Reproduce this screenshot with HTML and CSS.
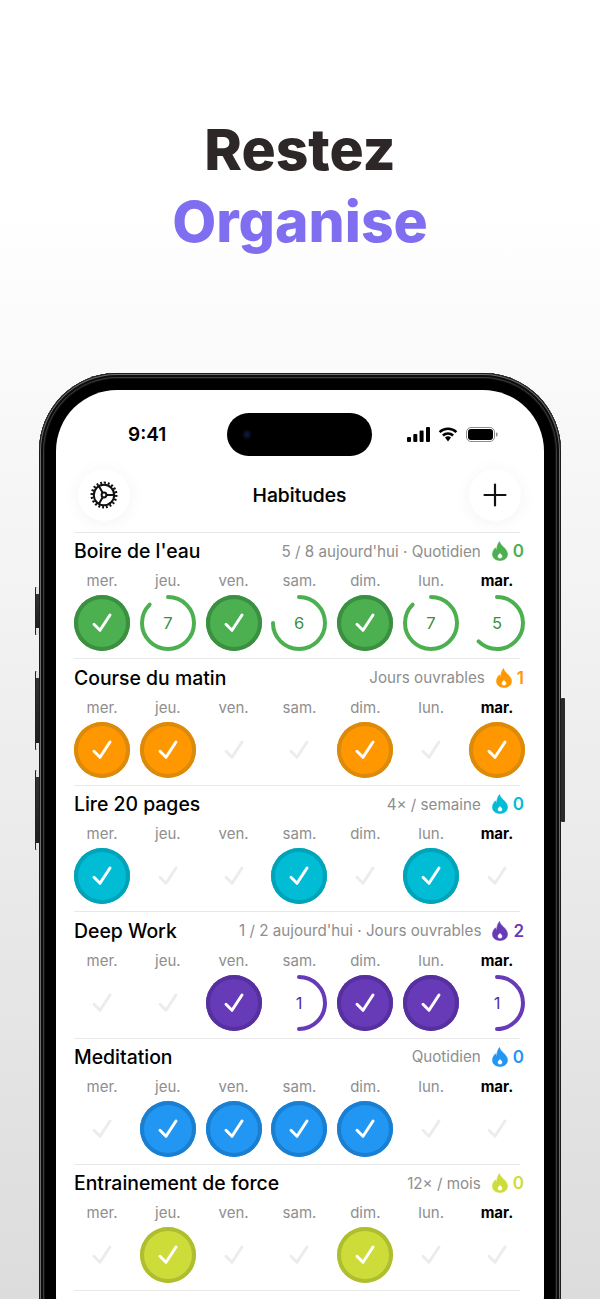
FILE: index.html
```html
<!DOCTYPE html>
<html lang="fr">
<head>
    <meta charset="UTF-8">
    <meta name="viewport" content="width=device-width, initial-scale=1.0">
    <title>Habitudes</title>
    <link rel="stylesheet" href="styles.css">
</head>
<body>
    <svg class="defs" width="0" height="0">
        <symbol id="check" viewBox="0 0 56 56"><path d="M20 29.300 26 35.300 36 20"/></symbol>
        <symbol id="flame" viewBox="0 0 18 20"><path fill-rule="evenodd" d="M8.500.5c.6 2.500 2.200 3.800 4 5.500 2 2 4 4.300 4 7.300 0 3.800-3.300 6.200-7.500 6.200s-7.500-2.400-7.500-6.200c0-3 1.500-5 3-6.500.2 1.200.6 2 1.200 2.400C5.700 6.200 6.500 3 8.500.5zM9 11.500c-.6 1.300-2.500 2-2.500 3.800 0 1.500 1.100 2.400 2.500 2.400s2.500-.9 2.500-2.400c0-1.700-2-2.400-2.500-3.800z"/></symbol>
    </svg>

    <h1 class="headline">Restez<br><span class="accent">Organise</span></h1>

    <div class="phone">
        <span class="side side-a"></span>
        <span class="side side-b"></span>
        <span class="side side-c"></span>
        <span class="side side-d"></span>
        <div class="screen">
            <div class="status">
                <span class="time">9:41</span>
                <span class="island"></span>
                <div class="status-icons">
                    <svg width="23" height="15" viewBox="0 0 23 15"><rect x="0" y="10" width="4" height="5" rx="1"/><rect x="6.300" y="7" width="4" height="8" rx="1"/><rect x="12.600" y="3.500" width="4" height="11.500" rx="1"/><rect x="19" y="0" width="4" height="15" rx="1"/></svg>
                    <svg width="20" height="15" viewBox="0 0 20 15"><path class="wifi-arc" d="M1.600 5.200C6.300.7 13.700.7 18.400 5.200M4.900 8.500c2.900-2.700 7.300-2.700 10.200 0"/><path d="M10 9.200c-1.200 0-2.200.4-3 1.200l3 4.200 3-4.200c-.8-.8-1.800-1.200-3-1.200z"/></svg>
                    <svg width="32" height="15" viewBox="0 0 32 15"><rect x=".5" y=".5" width="28" height="14" rx="4.500" fill="none" stroke="#8c8c8c"/><rect x="2" y="2" width="25" height="11" rx="3"/><rect x="30" y="5.500" width="1.500" height="4" rx=".7" fill="#8c8c8c"/></svg>
                </div>
            </div>

            <div class="nav">
                <button class="round-btn" type="button">
                    <svg class="gear" width="30" height="30" viewBox="0 0 30 30">
                        <circle class="gear-teeth" cx="15" cy="15" r="12.200" pathLength="40"/>
                        <circle class="gear-ring" cx="15" cy="15" r="10.200"/>
                        <path class="gear-ring" d="M17.400 15H25M13.800 12.900 10 6.300M13.800 17.100 10 23.700"/>
                        <circle class="gear-ring" cx="15" cy="15" r="2.400"/>
                    </svg>
                </button>
                <span class="nav-title">Habitudes</span>
                <button class="round-btn" type="button">
                    <svg width="24" height="24" viewBox="0 0 24 24"><path class="plus" d="M12 1.500V22.500M1.500 12H22.500"/></svg>
                </button>
            </div>

            <section class="habit green">
                <div class="habit-head">
                    <span class="habit-name">Boire de l'eau</span>
                    <span class="habit-meta">5 / 8 aujourd'hui · Quotidien</span>
                    <span class="streak"><svg width="18" height="20"><use href="#flame"/></svg>0</span>
                </div>
                <div class="days">
                    <div class="day"><span>mer.</span><div class="mark done"><svg><use href="#check"/></svg></div></div>
                    <div class="day"><span>jeu.</span><svg class="ring" viewBox="0 0 56 56"><circle cx="28" cy="28" r="26" pathLength="8" stroke-dasharray="7 8" transform="rotate(-90 28 28)"/><text x="28" y="34">7</text></svg></div>
                    <div class="day"><span>ven.</span><div class="mark done"><svg><use href="#check"/></svg></div></div>
                    <div class="day"><span>sam.</span><svg class="ring" viewBox="0 0 56 56"><circle cx="28" cy="28" r="26" pathLength="8" stroke-dasharray="6 8" transform="rotate(-90 28 28)"/><text x="28" y="34">6</text></svg></div>
                    <div class="day"><span>dim.</span><div class="mark done"><svg><use href="#check"/></svg></div></div>
                    <div class="day"><span>lun.</span><svg class="ring" viewBox="0 0 56 56"><circle cx="28" cy="28" r="26" pathLength="8" stroke-dasharray="7 8" transform="rotate(-90 28 28)"/><text x="28" y="34">7</text></svg></div>
                    <div class="day today"><span>mar.</span><svg class="ring" viewBox="0 0 56 56"><circle cx="28" cy="28" r="26" pathLength="8" stroke-dasharray="5 8" transform="rotate(-90 28 28)"/><text x="28" y="34">5</text></svg></div>
                </div>
            </section>

            <section class="habit orange">
                <div class="habit-head">
                    <span class="habit-name">Course du matin</span>
                    <span class="habit-meta">Jours ouvrables</span>
                    <span class="streak"><svg width="18" height="20"><use href="#flame"/></svg>1</span>
                </div>
                <div class="days">
                    <div class="day"><span>mer.</span><div class="mark done"><svg><use href="#check"/></svg></div></div>
                    <div class="day"><span>jeu.</span><div class="mark done"><svg><use href="#check"/></svg></div></div>
                    <div class="day"><span>ven.</span><div class="mark"><svg><use href="#check"/></svg></div></div>
                    <div class="day"><span>sam.</span><div class="mark"><svg><use href="#check"/></svg></div></div>
                    <div class="day"><span>dim.</span><div class="mark done"><svg><use href="#check"/></svg></div></div>
                    <div class="day"><span>lun.</span><div class="mark"><svg><use href="#check"/></svg></div></div>
                    <div class="day today"><span>mar.</span><div class="mark done"><svg><use href="#check"/></svg></div></div>
                </div>
            </section>

            <section class="habit cyan">
                <div class="habit-head">
                    <span class="habit-name">Lire 20 pages</span>
                    <span class="habit-meta">4× / semaine</span>
                    <span class="streak"><svg width="18" height="20"><use href="#flame"/></svg>0</span>
                </div>
                <div class="days">
                    <div class="day"><span>mer.</span><div class="mark done"><svg><use href="#check"/></svg></div></div>
                    <div class="day"><span>jeu.</span><div class="mark"><svg><use href="#check"/></svg></div></div>
                    <div class="day"><span>ven.</span><div class="mark"><svg><use href="#check"/></svg></div></div>
                    <div class="day"><span>sam.</span><div class="mark done"><svg><use href="#check"/></svg></div></div>
                    <div class="day"><span>dim.</span><div class="mark"><svg><use href="#check"/></svg></div></div>
                    <div class="day"><span>lun.</span><div class="mark done"><svg><use href="#check"/></svg></div></div>
                    <div class="day today"><span>mar.</span><div class="mark"><svg><use href="#check"/></svg></div></div>
                </div>
            </section>

            <section class="habit purple">
                <div class="habit-head">
                    <span class="habit-name">Deep Work</span>
                    <span class="habit-meta">1 / 2 aujourd'hui · Jours ouvrables</span>
                    <span class="streak"><svg width="18" height="20"><use href="#flame"/></svg>2</span>
                </div>
                <div class="days">
                    <div class="day"><span>mer.</span><div class="mark"><svg><use href="#check"/></svg></div></div>
                    <div class="day"><span>jeu.</span><div class="mark"><svg><use href="#check"/></svg></div></div>
                    <div class="day"><span>ven.</span><div class="mark done"><svg><use href="#check"/></svg></div></div>
                    <div class="day"><span>sam.</span><svg class="ring" viewBox="0 0 56 56"><circle cx="28" cy="28" r="26" pathLength="8" stroke-dasharray="4 8" transform="rotate(-90 28 28)"/><text x="28" y="34">1</text></svg></div>
                    <div class="day"><span>dim.</span><div class="mark done"><svg><use href="#check"/></svg></div></div>
                    <div class="day"><span>lun.</span><div class="mark done"><svg><use href="#check"/></svg></div></div>
                    <div class="day today"><span>mar.</span><svg class="ring" viewBox="0 0 56 56"><circle cx="28" cy="28" r="26" pathLength="8" stroke-dasharray="4 8" transform="rotate(-90 28 28)"/><text x="28" y="34">1</text></svg></div>
                </div>
            </section>

            <section class="habit blue">
                <div class="habit-head">
                    <span class="habit-name">Meditation</span>
                    <span class="habit-meta">Quotidien</span>
                    <span class="streak"><svg width="18" height="20"><use href="#flame"/></svg>0</span>
                </div>
                <div class="days">
                    <div class="day"><span>mer.</span><div class="mark"><svg><use href="#check"/></svg></div></div>
                    <div class="day"><span>jeu.</span><div class="mark done"><svg><use href="#check"/></svg></div></div>
                    <div class="day"><span>ven.</span><div class="mark done"><svg><use href="#check"/></svg></div></div>
                    <div class="day"><span>sam.</span><div class="mark done"><svg><use href="#check"/></svg></div></div>
                    <div class="day"><span>dim.</span><div class="mark done"><svg><use href="#check"/></svg></div></div>
                    <div class="day"><span>lun.</span><div class="mark"><svg><use href="#check"/></svg></div></div>
                    <div class="day today"><span>mar.</span><div class="mark"><svg><use href="#check"/></svg></div></div>
                </div>
            </section>

            <section class="habit lime">
                <div class="habit-head">
                    <span class="habit-name">Entrainement de force</span>
                    <span class="habit-meta">12× / mois</span>
                    <span class="streak"><svg width="18" height="20"><use href="#flame"/></svg>0</span>
                </div>
                <div class="days">
                    <div class="day"><span>mer.</span><div class="mark"><svg><use href="#check"/></svg></div></div>
                    <div class="day"><span>jeu.</span><div class="mark done"><svg><use href="#check"/></svg></div></div>
                    <div class="day"><span>ven.</span><div class="mark"><svg><use href="#check"/></svg></div></div>
                    <div class="day"><span>sam.</span><div class="mark"><svg><use href="#check"/></svg></div></div>
                    <div class="day"><span>dim.</span><div class="mark done"><svg><use href="#check"/></svg></div></div>
                    <div class="day"><span>lun.</span><div class="mark"><svg><use href="#check"/></svg></div></div>
                    <div class="day today"><span>mar.</span><div class="mark"><svg><use href="#check"/></svg></div></div>
                </div>
            </section>
            <div class="habit-end"></div>
        </div>
    </div>
</body>
</html>
```

FILE: styles.css
```css
* {
    box-sizing: border-box;
}
html, body {
    height: 1299px;
    margin: 0;
    overflow: hidden;
}
body {
    font-family: Inter, "Liberation Sans", sans-serif;
    background: linear-gradient(#ffffff 16%, #dcdcdc 100%);
    color: #000;
}
.defs {
    position: absolute;
}
.headline {
    margin: 0;
    padding-top: 114px;
    height: 373px;
    text-align: center;
    font-size: 57px;
    line-height: 72px;
    font-weight: 800;
    color: #2e2727;
}
.accent {
    color: #7f6ff0;
}

/* phone frame */
.phone {
    position: relative;
    width: 522px;
    height: 1000px;
    margin-left: 39px;
    padding: 17px;
    border-radius: 78px;
    background: #000;
    box-shadow: inset 0 0 0 1px #1c1c1c, inset 0 0 0 2px #6e6e6e, inset 0 0 0 4px #0c0c0c, inset 0 0 0 5px #3a3a3a, inset 0 0 0 6px #111;
}
.side {
    position: absolute;
    width: 4px;
    border-radius: 1px;
    background: linear-gradient(#e4e4e4 0 7px, #333 7px, #1e1e1e calc(100% - 7px), #e4e4e4 calc(100% - 7px));
    box-shadow: inset 1px 0 0 #222;
}
.side-a { left: -4px; top: 214px; height: 48px; }
.side-b { left: -4px; top: 298px; height: 79px; }
.side-c { left: -4px; top: 397px; height: 80px; }
.side-d { right: -4px; top: 325px; height: 124px; background: #2a2a2a; box-shadow: none; }
.screen {
    height: 966px;
    border-radius: 61px;
    background: #fff;
    overflow: hidden;
}

/* status bar */
.status {
    display: flex;
    align-items: center;
    height: 66px;
    padding-top: 23px;
    padding-left: 72px;
}
.time {
    width: 99px;
    font-size: 19px;
    font-weight: 600;
}
.island {
    position: relative;
    width: 145px;
    height: 43px;
    border-radius: 22px;
    background: #000;
}
/* camera lens */
.island::after {
    content: "";
    position: absolute;
    left: 15px;
    top: 16px;
    width: 10px;
    height: 11px;
    border-radius: 50%;
    background: radial-gradient(#151a4a, #000 75%);
}
.status-icons {
    display: flex;
    align-items: center;
    gap: 8px;
    margin-left: 35px;
}
.wifi-arc {
    fill: none;
    stroke: #000;
    stroke-width: 2.500;
}

/* nav */
.nav {
    display: flex;
    align-items: center;
    justify-content: space-between;
    height: 76px;
    padding: 1px 23px 0 22px;
}
.round-btn {
    display: flex;
    align-items: center;
    justify-content: center;
    width: 52px;
    height: 52px;
    padding: 0;
    border: none;
    border-radius: 50%;
    background: #fff;
    box-shadow: 0 2px 18px rgba(0, 0, 0, 0.05);
}
.nav-title {
    font-size: 19.300px;
    font-weight: 500;
    -webkit-text-stroke: 0.150px #000;
}
.gear circle, .gear path {
    fill: none;
    stroke: #111;
}
.gear-ring {
    stroke-width: 2;
}
.gear-teeth {
    stroke-width: 2.600;
    stroke-dasharray: 1 1;
}
.plus {
    fill: none;
    stroke: #111;
    stroke-width: 2.200;
    stroke-linecap: round;
}

/* habits */
.habit {
    height: 126.400px;
    margin-left: 18px;
    margin-right: 19px;
}
.habit::before, .habit-end::before {
    content: "";
    display: block;
    height: 1px;
    margin-right: 5px;
    background: #e8e8e8;
}
.habit-end {
    margin: 0 19px 0 18px;
}
.habit-head {
    display: flex;
    align-items: center;
    height: 24px;
    margin-top: 6.400px;
}
.habit-name {
    flex: 1;
    font-size: 19.400px;
    font-weight: 500;
}
.habit-meta {
    font-size: 15.200px;
    color: #8e8e8e;
}
.streak {
    display: flex;
    align-items: center;
    gap: 4px;
    margin-left: 10px;
    margin-right: 1px;
    font-size: 17px;
    font-weight: 600;
    color: var(--c);
}
.streak svg {
    fill: var(--c);
    stroke: var(--c);
    stroke-width: 0.600;
}
.days {
    display: grid;
    grid-template-columns: repeat(7, 56px);
    justify-content: space-between;
    margin-top: 9px;
}
.day {
    display: flex;
    flex-direction: column;
    align-items: center;
    gap: 5px;
}
.day span {
    font-size: 15px;
    line-height: 18px;
    color: #8e8e8e;
}
.today span {
    font-weight: 700;
    color: #000;
}
.mark {
    width: 56px;
    height: 56px;
    border-radius: 50%;
}
.mark svg {
    display: block;
    width: 56px;
    height: 56px;
    fill: none;
    stroke: #ececec;
    stroke-width: 3;
    stroke-linecap: round;
    stroke-linejoin: round;
}
.mark.done {
    background: var(--c);
    box-shadow: inset 0 0 0 4px var(--d);
}
.mark.done svg {
    stroke: #fff;
}
.ring {
    width: 56px;
    height: 56px;
    overflow: visible;
}
.ring circle {
    fill: none;
    stroke: var(--c);
    stroke-width: 4;
    stroke-linecap: round;
}
.ring text {
    font-size: 16.500px;
    text-anchor: middle;
    fill: var(--d);
}

.green { --c: #4caf50; --d: #3b8f40; }
.orange { --c: #ff9800; --d: #db8a0c; }
.cyan { --c: #00bcd4; --d: #00a3b8; }
.purple { --c: #673ab7; --d: #5730a0; }
.blue { --c: #2196f3; --d: #1b7fd1; }
.lime { --c: #cddc39; --d: #afbd30; }
```
